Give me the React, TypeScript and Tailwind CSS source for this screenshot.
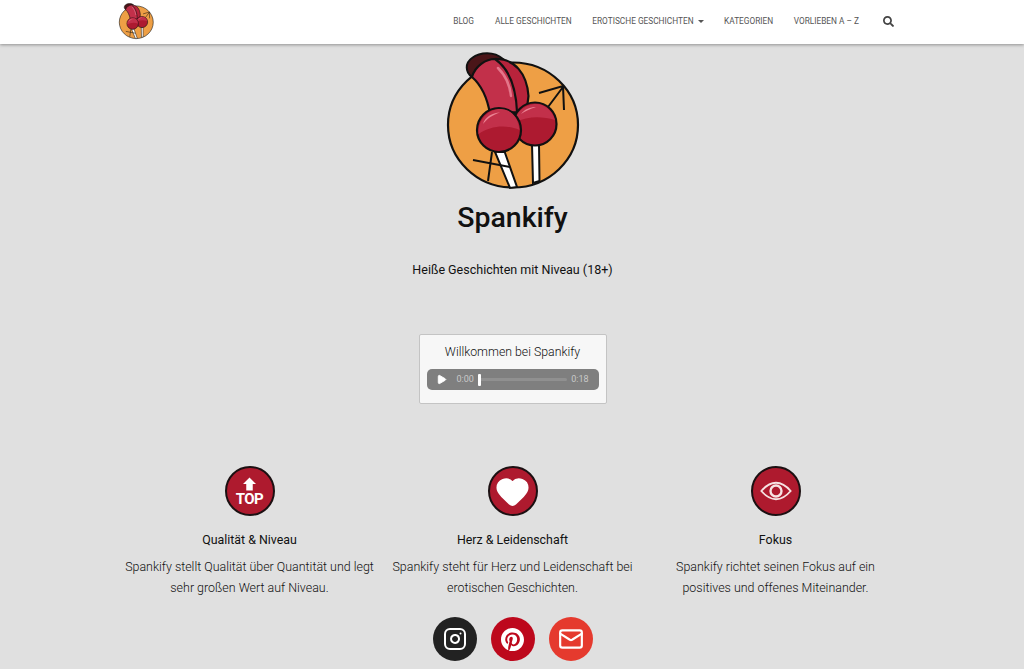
import { Play, Instagram, Mail, Heart } from "lucide-react";
import { FaSearch } from "react-icons/fa";

const NAV = ["BLOG", "ALLE GESCHICHTEN", "EROTISCHE GESCHICHTEN", "KATEGORIEN", "VORLIEBEN A – Z"];

function Logo({ className }: { className: string }) {
  return (
    <svg viewBox="0 0 180 160" className={className}>
      <ellipse cx="93" cy="81" rx="65" ry="62.5" fill="#ee9f45" stroke="#111" strokeWidth="2.2" />
      {/* arrow */}
      <path d="M128 63 L143 43 M119 49 L143 42 L144 66" fill="none" stroke="#111" strokeWidth="2" />
      {/* sticks */}
      <path d="M84 106 L97 143 L90 144 L75 108 Z" fill="#fff" stroke="#111" strokeWidth="2" />
      <path d="M112 100 L119 100 L119.5 137 L113 139 Z" fill="#fff" stroke="#111" strokeWidth="2" />
      <path d="M72 108 L68 137 M53 116 L90 123" fill="none" stroke="#111" strokeWidth="2" />
      {/* cap */}
      <path d="M52 33 C45 28 45 19 52 14 C60 8 74 7 83 15 L60 30 Z" fill="#4a1518" stroke="#111" strokeWidth="2" />
      {/* shaft, back lobe then front lobe */}
      <path d="M74 15 C95 14 107 30 108.500 52 L107 64 L92 70 L80 40 Z" fill="#b8233b" stroke="#111" strokeWidth="2.2" />
      <path d="M52 33 C55 22 66 15 75 15 C88 24 96 42 97 68 L70 70 C67 52 60 40 52 33 Z" fill="#c2304a" stroke="#111" strokeWidth="2.2" />
      <path d="M78 24 C85 31 90 42 91 52" fill="none" stroke="#e4768a" strokeWidth="2.5" strokeLinecap="round" />
      {/* balls */}
      <circle cx="115" cy="80" r="21.5" fill="#ad1a30" stroke="#111" strokeWidth="2.2" />
      <path d="M95 78 C96 66 108 60 116 60 C124 60 132 66 135 76 C122 72 108 72 95 78 Z" fill="#c2304a" />
      <path d="M101 70 C105 65 110 63 116 63 C110 65 105 67 101 70 Z" fill="#ec8494" />
      <circle cx="79" cy="86" r="22" fill="#ad1a30" stroke="#111" strokeWidth="2.2" />
      <path d="M58.500 90 C58 74 70 65 80 65 C90 65 98 72 99.500 86 C86 80 70 82 58.500 90 Z" fill="#c2304a" />
      <path d="M63 80 C65 73 72 69 80 68.500 C72 71 67 75 63 80 Z" fill="#ec8494" />
    </svg>
  );
}

function Feature({ icon, title, lines }: { icon: React.ReactNode; title: string; lines: string[] }) {
  return (
    <div className="flex flex-col items-center">
      <div className="flex h-[50px] w-[50px] items-center justify-center rounded-full border-2 border-[#1c1012] bg-[#ae1a2e] text-white">
        {icon}
      </div>
      <h4 className="mt-[16px] text-[12.4px] leading-[16px] font-normal text-[#111]">{title}</h4>
      <p className="mt-[8px] text-center text-[12.45px] leading-[21px] font-light text-[#111]">
        {lines.map((l) => (
          <span key={l} className="block whitespace-nowrap">
            {l}
          </span>
        ))}
      </p>
    </div>
  );
}

export default function App() {
  return (
    <div className="h-[669px] overflow-hidden bg-[#e0e0e0] font-['Roboto',sans-serif]">
      {/* navbar */}
      <header className="relative h-[44px] bg-white shadow-[0_1px_3px_rgba(0,0,0,0.35)]">
        <div className="flex h-full items-center pl-[112px] pr-[130px]">
          <Logo className="h-[42px] w-[47px]" />
          <nav className="ml-auto flex items-center pb-[1px] text-[8.3px] text-[#555]">
            {NAV.map((n, i) => (
              <span key={n} className={`flex items-center ${i === 0 ? "" : i === 1 ? "ml-[21px]" : "ml-[20.500px]"}`}>
                {n}
                {i === 2 && <span className="ml-[4px] h-0 w-0 border-x-[3px] border-t-[3px] border-x-transparent border-t-[#555]" />}
              </span>
            ))}
            <FaSearch size={11} className="ml-[24px] text-[#444]" />
          </nav>
        </div>
      </header>

      <main className="flex flex-col items-center pl-[1px]">
        <Logo className="ml-[-5px] h-[160px] w-[180px]" />
        <h1 className="mt-[-3px] text-[28.5px] leading-[34px] font-medium text-[#111]">Spankify</h1>
        <p className="mt-[27px] text-[12.5px] leading-[16px] font-normal text-[#111]">Heiße Geschichten mit Niveau (18+)</p>

        {/* audio box */}
        <div className="mt-[56px] flex h-[70px] w-[188px] flex-col items-center rounded-[2px] border border-[#c4c4c4] bg-[#f7f7f7] px-[7px]">
          <div className="mt-[9px] text-[12.3px] leading-[16px] font-light text-[#111]">Willkommen bei Spankify</div>
          <div className="mt-[9px] flex h-[21px] w-full items-center rounded-[5px] bg-[#7f7f7f] pl-[9px] pr-[10px] text-[9px] text-[#c9c9c9]">
            <Play size={11} className="fill-white text-white" />
            <span className="ml-[10px]">0:00</span>
            <span className="relative ml-[4px] h-[3px] flex-1 rounded bg-[#909090]">
              <span className="absolute top-[-4.5px] left-0 h-[12px] w-[3px] rounded-[1px] bg-white" />
            </span>
            <span className="ml-[4px]">0:18</span>
          </div>
        </div>

        {/* features */}
        <section className="mt-[62px] grid w-[789px] grid-cols-3">
          <Feature
            icon={
              <div className="mt-[-1px] flex flex-col items-center">
                <svg viewBox="0 0 14 14" className="h-[14px] w-[13px]">
                  <path d="M7 0 L14 7 L10.500 7 L10.500 14 L3.500 14 L3.500 7 L0 7 Z" fill="#fff" />
                </svg>
                <span className="mt-[3px] text-[15px] leading-[11px] font-bold tracking-[-0.5px]">TOP</span>
              </div>
            }
            title="Qualität & Niveau"
            lines={["Spankify stellt Qualität über Quantität und legt", "sehr großen Wert auf Niveau."]}
          />
          <Feature
            icon={<Heart size={35} className="fill-white text-white" />}
            title="Herz & Leidenschaft"
            lines={["Spankify steht für Herz und Leidenschaft bei", "erotischen Geschichten."]}
          />
          <Feature
            icon={
              <svg viewBox="0 0 36 24" className="h-[22px] w-[34px]" fill="none" stroke="#f6e3e3" strokeWidth="2">
                <path d="M2 12 C8 5 13 3 18 3 C23 3 28 5 34 12 C28 19 23 21 18 21 C13 21 8 19 2 12 Z" />
                <circle cx="18" cy="12" r="6" strokeWidth="2.600" />
              </svg>
            }
            title="Fokus"
            lines={["Spankify richtet seinen Fokus auf ein", "positives und offenes Miteinander."]}
          />
        </section>

        {/* social */}
        <div className="mt-[19px] flex gap-[14px]">
          <div className="flex h-[44px] w-[44px] items-center justify-center rounded-full bg-[#222] text-white">
            <Instagram size={24} strokeWidth={2} />
          </div>
          <div className="flex h-[44px] w-[44px] items-center justify-center rounded-full bg-[#bd081c]">
            <svg viewBox="0 0 24 24" className="h-[23px] w-[23px]" fill="#fff">
              <path d="M12 0C5.4 0 0 5.4 0 12c0 5.1 3.2 9.4 7.6 11.2-.1-.9-.2-2.4 0-3.4.2-.9 1.4-5.9 1.400-5.900s-.4-.7-.4-1.800c0-1.700 1-2.900 2.200-2.900 1 0 1.500.8 1.500 1.700 0 1-.7 2.600-1 4-.3 1.200.6 2.200 1.800 2.200 2.100 0 3.800-2.200 3.800-5.500 0-2.900-2.100-4.900-5-4.900-3.400 0-5.400 2.600-5.400 5.200 0 1 .4 2.100.9 2.700.1.100.1.200.1.300-.1.400-.3 1.200-.3 1.400-.1.200-.2.300-.4.200-1.500-.7-2.400-2.900-2.400-4.600 0-3.800 2.800-7.200 7.900-7.200 4.200 0 7.400 3 7.400 6.900 0 4.100-2.600 7.500-6.200 7.500-1.200 0-2.400-.6-2.800-1.400l-.8 2.900c-.3 1-1 2.300-1.500 3.100 1.100.3 2.300.5 3.600.5 6.600 0 12-5.400 12-12S18.600 0 12 0z" />
            </svg>
          </div>
          <div className="flex h-[44px] w-[44px] items-center justify-center rounded-full bg-[#e53a2e] text-white">
            <Mail size={26} strokeWidth={2} />
          </div>
        </div>
      </main>
    </div>
  );
}
